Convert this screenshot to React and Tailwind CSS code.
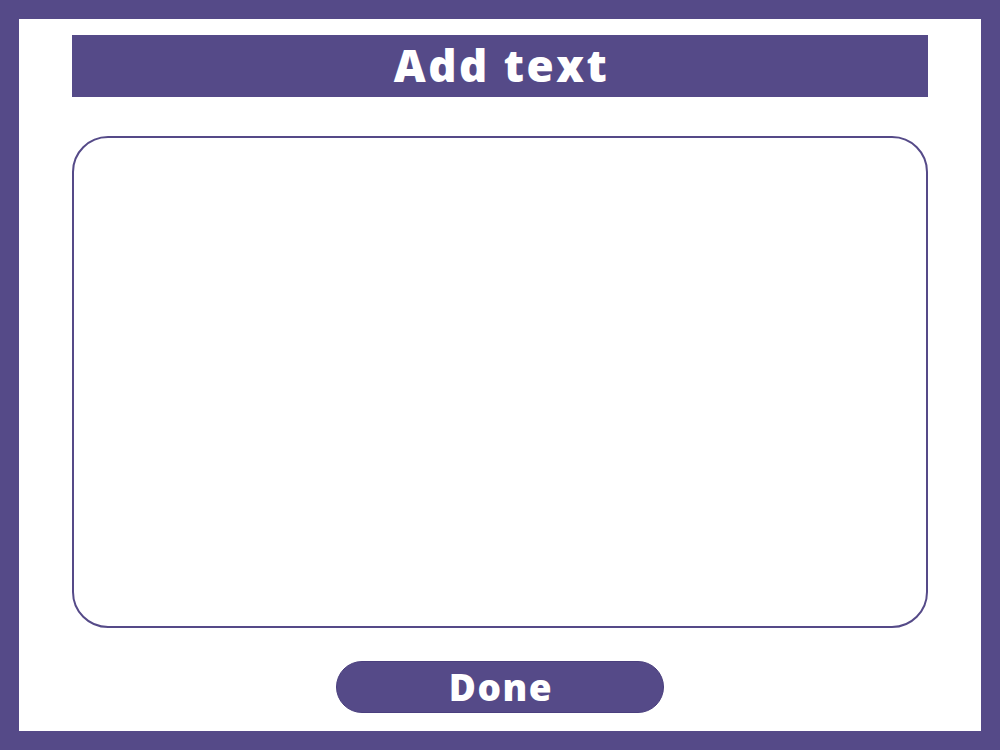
export default function App() {
  return (
    <div className="w-[1000px] h-[750px] bg-[#554a88] p-[19px]" style={{ fontFamily: '"Open Sans", "DejaVu Sans", sans-serif' }}>
      <div className="w-full h-full bg-white flex flex-col items-center px-[53px] pt-[16px]">
        <div className="w-full h-[62px] bg-[#554a88] flex items-center justify-center">
          <span className="text-white text-[44px] font-extrabold leading-none tracking-[2.5px] pl-[3px] pb-[2px]">Add text</span>
        </div>
        <div className="w-full h-[492px] mt-[39px] border-2 border-[#554a88] rounded-[36px]"></div>
        <button className="mt-[33px] w-[328px] h-[52px] rounded-full bg-[#554a88] border border-[#4a3f7e] flex items-center justify-center">
          <span className="text-white text-[37px] font-extrabold leading-none tracking-[1.5px] pl-[2px] pb-[2px]">Done</span>
        </button>
      </div>
    </div>
  );
}
